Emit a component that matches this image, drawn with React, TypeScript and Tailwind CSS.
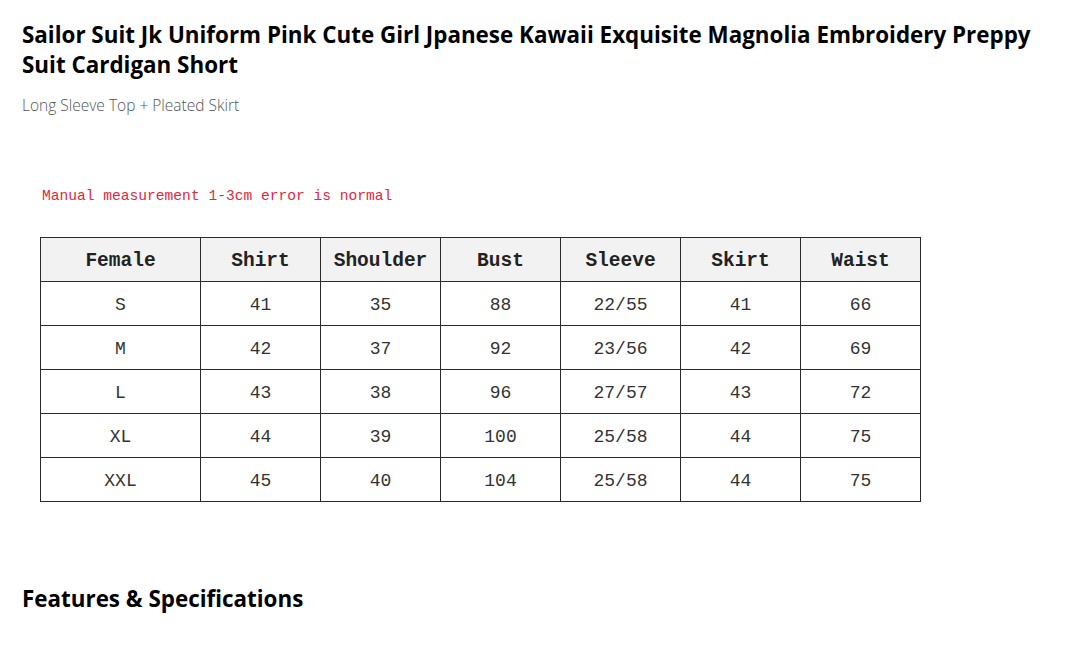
const headers = ["Female", "Shirt", "Shoulder", "Bust", "Sleeve", "Skirt", "Waist"];

const rows = [
  ["S", "41", "35", "88", "22/55", "41", "66"],
  ["M", "42", "37", "92", "23/56", "42", "69"],
  ["L", "43", "38", "96", "27/57", "43", "72"],
  ["XL", "44", "39", "100", "25/58", "44", "75"],
  ["XXL", "45", "40", "104", "25/58", "44", "75"],
];

export default function App() {
  return (
    <div className="min-h-screen bg-white pl-[22px] pt-[20px] font-['Open_Sans','Noto_Sans',sans-serif] text-black">
      {/* Title */}
      <h1 className="text-[22.4px] font-bold leading-[30px] pr-[40px]">
        Sailor Suit Jk Uniform Pink Cute Girl Jpanese Kawaii Exquisite Magnolia Embroidery Preppy Suit Cardigan Short
      </h1>
      <p className="mt-[16px] text-[15.5px] font-light text-[#555] leading-[18px]">
        Long Sleeve Top + Pleated Skirt
      </p>

      {/* Size chart */}
      <div className="mt-[73px] pl-[18px] font-['Liberation_Mono',monospace]">
        <p className="text-[14.6px] leading-[18px] text-[#e8243c] pl-[2px]">
          Manual measurement 1-3cm error is normal
        </p>
        <table className="mt-[32px] border-collapse">
          <thead>
            <tr className="bg-[#f2f2f2]">
              {headers.map((h, i) => (
                <th
                  key={h}
                  className={`${i === 0 ? "w-[160px]" : "w-[120px]"} h-[44px] border border-[#2a2a2a] text-[19.5px] font-bold text-[#222] text-center px-0 pt-[4px] pb-0`}
                >
                  {h}
                </th>
              ))}
            </tr>
          </thead>
          <tbody>
            {rows.map((r) => (
              <tr key={r[0]}>
                {r.map((c, i) => (
                  <td
                    key={i}
                    className="h-[44px] border border-[#2a2a2a] text-[18px] text-[#333] text-center px-0 pt-[3px] pb-0"
                  >
                    {c}
                  </td>
                ))}
              </tr>
            ))}
          </tbody>
        </table>
      </div>

      <h2 className="mt-[82px] text-[22.4px] font-bold leading-[30px]">
        Features &amp; Specifications
      </h2>
    </div>
  );
}
